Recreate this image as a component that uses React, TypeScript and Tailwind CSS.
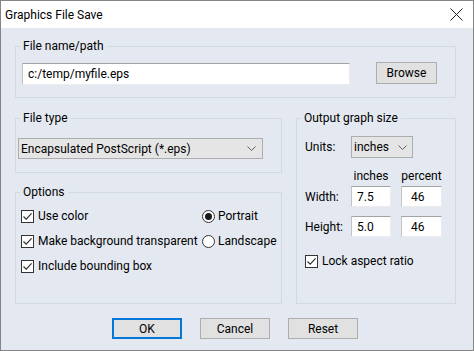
import type { ReactNode } from 'react'

const fontCls = "font-['Segoe_UI',Roboto,sans-serif] text-[12px] leading-4 text-black"

function Group({
  label,
  className = '',
  children,
}: {
  label: string
  className?: string
  children: ReactNode
}) {
  return (
    <fieldset className={`border border-[#d3d9e1] ${className}`}>
      <legend className="ml-[4px] px-[3px] leading-4">{label}</legend>
      {children}
    </fieldset>
  )
}

function CheckBox({ label }: { label: string }) {
  return (
    <div className="flex h-4 items-center gap-[4px]">
      <svg width="13" height="13" viewBox="0 0 13 13" className="shrink-0">
        <rect x="0.5" y="0.5" width="12" height="12" fill="#fff" stroke="#333" />
        <path d="M2.5 6.5 L5.2 9.2 L10.6 3.4" fill="none" stroke="#333" strokeWidth="1.2" />
      </svg>
      <span>{label}</span>
    </div>
  )
}

function Radio({ label, checked }: { label: string; checked?: boolean }) {
  return (
    <div className="flex h-4 items-center gap-[3px]">
      <svg width="13" height="13" viewBox="0 0 13 13" className="shrink-0">
        <circle cx="6.5" cy="6.5" r="6" fill="#fff" stroke="#333" />
        {checked ? <circle cx="6.5" cy="6.5" r="3.5" fill="#1a1a1a" /> : null}
      </svg>
      <span>{label}</span>
    </div>
  )
}

function Chevron() {
  return (
    <svg width="9" height="5" viewBox="0 0 9 5" className="shrink-0">
      <path d="M0.5 0.5 L4.5 4.5 L8.5 0.5" fill="none" stroke="#606060" />
    </svg>
  )
}

function TextBox({ value, className = '' }: { value: string; className?: string }) {
  return (
    <div
      className={`flex items-center border border-t-[#a3a3a3] border-l-[#c4c4c4] border-r-[#ececec] border-b-[#ececec] bg-white pl-[5px] ${className}`}
    >
      {value}
    </div>
  )
}

function Button({ label, primary }: { label: string; primary?: boolean }) {
  return (
    <div
      className={`flex h-[21px] w-[70px] items-center justify-center bg-[#e1e1e1] ${
        primary ? 'border-2 border-[#0078d7]' : 'border border-[#adadad]'
      }`}
    >
      {label}
    </div>
  )
}

export default function App() {
  return (
    <div className={`flex h-[351px] w-[474px] flex-col border border-[#858585] ${fontCls}`}>
      <div className="flex h-[27px] shrink-0 items-center justify-between bg-white pl-[4px] pr-[10px]">
        <span>Graphics File Save</span>
        <svg width="13" height="13" viewBox="0 0 13 13">
          <path d="M0.5 0.5 L12.5 12.5 M12.5 0.5 L0.5 12.5" stroke="#222" strokeWidth="1" />
        </svg>
      </div>

      <div className="flex flex-1 flex-col bg-[#e4e9f1] pl-[14px] pr-[17px]">
        <Group label="File name/path" className="mt-[10px]">
          <div className="flex items-center pb-[12px] pl-[6px] pt-[9px]">
            <TextBox value="c:/temp/myfile.eps" className="h-[22px] w-[328px] pl-[3px]" />
            <div className="ml-[26px] flex h-[22px] w-[61px] -translate-y-px items-center justify-center border border-[#adadad] bg-[#e1e1e1]">
              Browse
            </div>
          </div>
        </Group>

        <div className="mt-[12px] grid h-[194px] grid-cols-[267px_160px] gap-x-[14px]">
          <div className="flex flex-col">
            <Group label="File type">
              <div className="pb-[13px] pl-[2px] pt-[12px]">
                <div className="flex h-[21px] w-[245px] items-center justify-between border border-[#adadad] bg-[#e5e5e5] pl-[2px] pr-[6px]">
                  <span>Encapsulated PostScript (*.eps)</span>
                  <Chevron />
                </div>
              </div>
            </Group>
            <Group label="Options" className="mt-[11px] flex-1">
              <div className="grid grid-cols-[181px_auto] gap-y-[9px] pl-[5px] pt-[8px]">
                <CheckBox label="Use color" />
                <Radio label="Portrait" checked />
                <CheckBox label="Make background transparent" />
                <Radio label="Landscape" />
                <CheckBox label="Include bounding box" />
              </div>
            </Group>
          </div>

          <Group label="Output graph size">
            <div className="flex flex-col pl-[8px] pt-[10px]">
              <div className="flex items-center">
                <span className="w-[46px]">Units:</span>
                <div className="flex h-[22px] w-[62px] items-center justify-between border border-[#adadad] bg-[#e5e5e5] pl-[2px] pr-[5px]">
                  <span>inches</span>
                  <Chevron />
                </div>
              </div>
              <div className="mt-[10px] flex pl-[46px]">
                <span className="w-[40px] text-center">inches</span>
                <span className="ml-[10px] w-[41px] text-center">percent</span>
              </div>
              <div className="mt-[2px] flex items-center">
                <span className="w-[46px]">Width:</span>
                <TextBox value="7.5" className="h-[21px] w-[40px]" />
                <TextBox value="46" className="ml-[10px] h-[21px] w-[41px] pl-[9px]" />
              </div>
              <div className="mt-[9px] flex items-center">
                <span className="w-[46px]">Height:</span>
                <TextBox value="5.0" className="h-[21px] w-[40px]" />
                <TextBox value="46" className="ml-[10px] h-[21px] w-[41px] pl-[9px]" />
              </div>
              <div className="mt-[16px] flex">
                <CheckBox label="Lock aspect ratio" />
              </div>
            </div>
          </Group>
        </div>

        <div className="mt-[14px] flex gap-[18px] pl-[97px]">
          <Button label="OK" primary />
          <Button label="Cancel" />
          <Button label="Reset" />
        </div>
      </div>
    </div>
  )
}
